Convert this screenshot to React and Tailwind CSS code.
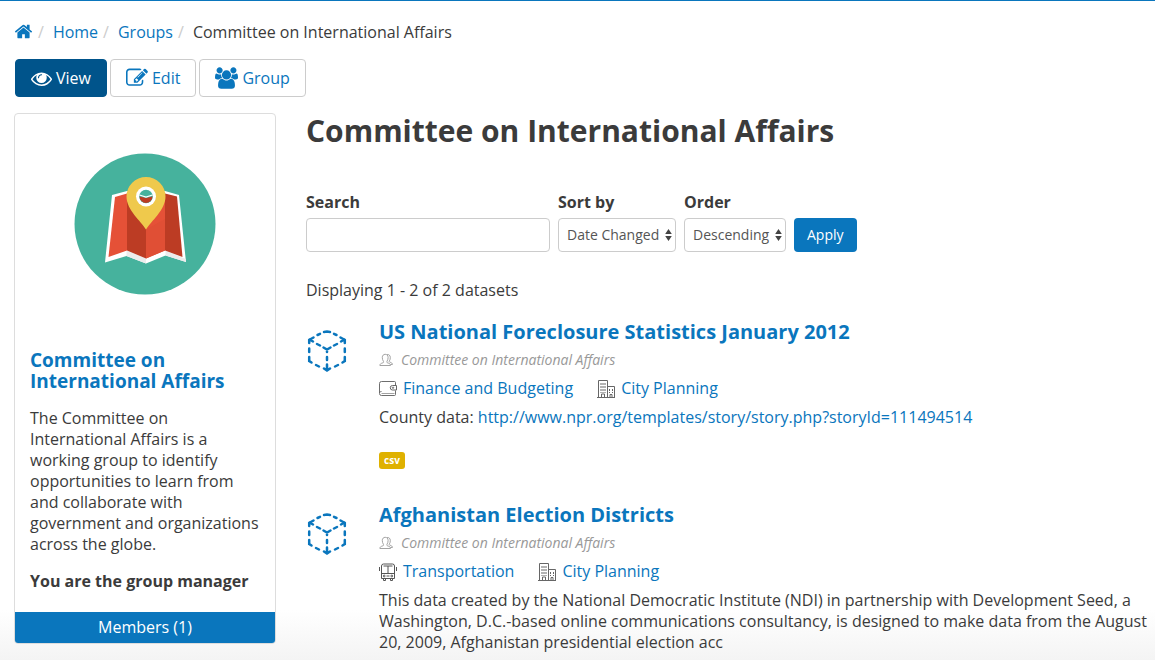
const HOME = "M1472 992v480q0 26-19 45t-45 19h-384v-384h-256v384h-384q-26 0-45-19t-19-45v-480q0-1 .5-3t.5-3l575-474 575 474q1 2 1 6zm223-69l-62 74q-8 9-21 11h-3q-13 0-21-7l-692-577-692 577q-12 8-24 7-13-2-21-11l-62-74q-8-10-7-23.5t11-21.5l719-599q32-26 76-26t76 26l244 204v-195q0-14 9-23t23-9h192q14 0 23 9t9 23v408l219 182q10 8 11 21.5t-7 23.5z";
const EYE = "M1664 960q-152-236-381-353 61 104 61 225 0 185-131.5 316.5t-316.5 131.5-316.5-131.5-131.5-316.5q0-121 61-225-229 117-381 353 133 205 333.5 326.5t434.5 121.5 434.5-121.5 333.5-326.5zm-720-384q0-20-14-34t-34-14q-125 0-214.5 89.5t-89.5 214.5q0 20 14 34t34 14 34-14 14-34q0-86 61-147t147-61q20 0 34-14t14-34zm848 384q0 34-20 69-140 230-376.5 368.5t-499.5 138.5-499.5-139-376.5-368q-20-35-20-69t20-69q140-229 376.5-368t499.5-139 499.5 139 376.5 368q20 35 20 69z";
const EDIT = "M888 1184l116-116-152-152-116 116v56h96v96h56zm440-720q-16-16-33 1l-350 350q-17 17-1 33t33-1l350-350q17-17 1-33zm80 594v190q0 119-84.5 203.5t-203.5 84.5h-832q-119 0-203.5-84.5t-84.5-203.5v-832q0-119 84.5-203.5t203.5-84.5h832q63 0 117 25 15 7 18 23 3 17-9 29l-49 49q-14 14-32 8-23-6-45-6h-832q-66 0-113 47t-47 113v832q0 66 47 113t113 47h832q66 0 113-47t47-113v-126q0-13 9-22l64-64q15-15 35-7t20 29zm-96-738l288 288-672 672h-288v-288zm444 132l-92 92-288-288 92-92q28-28 68-28t68 28l152 152q28 28 28 68t-28 68z";
const USERS = "M529 896q-162 5-265 128h-134q-82 0-138-40.5t-56-118.5q0-353 124-353 6 0 43.5 21t97.5 42.5 119 21.5q67 0 133-23-5 37-5 66 0 139 81 256zm1071 637q0 120-73 189.5t-194 69.5h-874q-121 0-194-69.5t-73-189.5q0-53 3.5-103.5t14-109 26.5-108.5 43-97.5 62-81 85.5-53.5 111.5-20q10 0 43 21.5t73 48 107 48 135 21.5 135-21.5 107-48 73-48 43-21.5q61 0 111.5 20t85.5 53.5 62 81 43 97.5 26.5 108.5 14 109 3.5 103.5zm-1024-1277q0 106-75 181t-181 75-181-75-75-181 75-181 181-75 181 75 75 181zm704 384q0 159-112.5 271.5t-271.5 112.5-271.5-112.5-112.5-271.5 112.5-271.5 271.5-112.5 271.5 112.5 112.5 271.5zm576 225q0 78-56 118.5t-138 40.5h-134q-103-123-265-128 81-117 81-256 0-29-5-66 66 23 133 23 59 0 119-21.5t97.5-42.5 43.5-21q124 0 124 353zm-128-609q0 106-75 181t-181 75-181-75-75-181 75-181 181-75 181 75 75 181z";

function Glyph({ d, viewBox = "0 0 1792 1792", className }) {
  return (
    <svg viewBox={viewBox} className={className} fill="currentColor" aria-hidden="true">
      <path d={d} />
    </svg>
  );
}

function MapLogo() {
  return (
    <svg viewBox="0 0 142 142" className="mx-auto size-[142px]" role="img" aria-label="Committee on International Affairs">
      <circle cx="71" cy="71" r="70.5" fill="#46b29d" />
      <path d="M38 42 53 38h38l14 4 7 67-20.500-6.500L72 110.500 52.500 103 31 109.500Z" fill="#fff" />
      <path d="M72 105.500v5L52.500 103v-5.500ZM91.500 97.500v5L112 109l-.3-3Z" fill="#ececec" />
      <path d="M41 44 53 40.500V97.500L34.500 104Z" fill="#e55137" />
      <path d="M53 40.500 72 46v59.500L53 97.500Z" fill="#bc3c24" />
      <path d="M72 46 91 40.500V97.500l-19 8Z" fill="#e55137" />
      <path d="M72 76.500 91 66V97.500l-19 8Z" fill="#e04f35" />
      <path d="M91 40.500 103 43.500 108.500 104 91 97.500Z" fill="#bc3c24" />
      <path d="M72 76.500C67 68 52.500 57 52.500 43.500a19.500 19.500 0 0 1 39 0C91.500 57 77 68 72 76.500Z" fill="#efc94c" />
      <circle cx="72" cy="43.500" r="10" fill="#fff" />
      <circle cx="72" cy="43.500" r="6.800" fill="#46b29d" />
      <path d="M65.500 43.500 72 45 78.500 43.500a6.500 6.500 0 0 1-13 0Z" fill="#bc3c24" />
      <path d="m65.500 42 6.500 2 6.500-2" fill="none" stroke="#fff" strokeWidth="1.200" />
    </svg>
  );
}

function Cube() {
  return (
    <svg viewBox="0 0 40 42" className="mt-[9px] h-[42px] w-10 shrink-0 text-[#0a76bd]" fill="none" stroke="currentColor" strokeWidth="2.500" strokeLinecap="round" aria-hidden="true">
      <path d="M17 2 20 1.500 23 2M10.500 5 13 3.800M29.500 5 27 3.800M2.200 13V10L6.500 7.500M37.800 13V10L33.500 7.500M2.500 9.500 6 11.500M37.500 9.500 34 11.500" />
      <path d="M10 14 13 15.500M30 14 27 15.500M16.500 17.500 20 19.500 23.500 17.500M20 19.500V22M20 27V30M20 34.500V40M17 38.500 20 40.500 23 38.500" />
      <path d="M2.200 18.500V22M37.800 18.500V22M2.200 27V31L4.500 32.500M37.800 27V31L35.500 32.500M9 35 12 36.500M31 35 28 36.500" />
    </svg>
  );
}

function PeopleIcon() {
  return (
    <svg viewBox="0 0 14 14" className="size-[14px] shrink-0" fill="none" stroke="#999" strokeWidth="0.900" strokeLinejoin="round" aria-hidden="true">
      <path d="M.9 12.500c0-1.500.8-2 3-2.700.8-.3.900-.8.500-1.500C3.700 7.200 3.300 6 3.300 4.500c0-2 1.200-3.200 2.900-3.200s2.900 1.200 2.900 3.200c0 1.500-.4 2.700-1.100 3.800-.4.700-.3 1.200.5 1.500 2.200.7 3 1.200 3 2.700Z" />
      <path d="M8 1.700c1.800-.6 3.300.7 3.300 2.800 0 1.500-.3 2.500-.9 3.400-.4.600-.2 1 .4 1.200 1.700.6 2.600 1 2.600 2.400h-1.900" />
    </svg>
  );
}

function WalletIcon() {
  return (
    <svg viewBox="0 0 18 17" className="h-[17px] w-[18px] shrink-0" fill="none" stroke="#666" strokeWidth="1" aria-hidden="true">
      <path d="M16.500 5V2.500a1 1 0 0 0-1-1h-13a2 2 0 0 0-2 2v10a2 2 0 0 0 2 2h13a1 1 0 0 0 1-1v-4M.5 13c0-.8.800-1.500 2-1.500" opacity=".95" />
      <path d="M2.500 13.500h13" opacity=".6" />
      <path d="M17.500 5.500h-4a2.200 2.200 0 0 0 0 4.500h4Z" />
      <circle cx="14" cy="7.700" r=".7" />
    </svg>
  );
}

function BusIcon() {
  return (
    <svg viewBox="0 0 18 18" className="size-[18px] shrink-0" fill="none" stroke="#555" strokeWidth="1" aria-hidden="true">
      <path d="M2.500 15.500V3a2 2 0 0 1 2-2h9a2 2 0 0 1 2 2v12.500ZM2.500 10.500h13M9 3v7.500M4.500 3h9M.5 4v4M17.500 4v4M4.500 15.500v2h2v-2M11.500 15.500v2h2v-2M7.500 13h3" />
      <circle cx="5.200" cy="13" r=".9" />
      <circle cx="12.800" cy="13" r=".9" />
    </svg>
  );
}

function CityIcon() {
  return (
    <svg viewBox="0 0 18 18" className="size-[18px] shrink-0" fill="none" stroke="#666" strokeWidth="1" aria-hidden="true">
      <path d="M1.500 17V.5h9V17M10.500 6.500h7V17M0 17.500h18M4.500 17v-3h3v3M13 17v-2.500h2V17" />
      <path d="M4 3v10M6 3v10M8 3v10M12.500 9v4M15.500 9v4" strokeDasharray="2 1" />
    </svg>
  );
}

function Tab({ active, children }) {
  return (
    <a
      href="#"
      className={
        "flex h-[38px] items-center gap-1 rounded border px-[15px] " +
        (active ? "border-[#00548b] bg-[#00548b] text-white" : "border-[#ccc] bg-white text-[#0a76bd]")
      }
    >
      {children}
    </a>
  );
}

function SelectField({ id, label, value, width }) {
  return (
    <div>
      <label htmlFor={id} className="mb-[5px] block font-bold">{label}</label>
      <div className={"relative " + width}>
        <select id={id} className="block h-[34px] w-full appearance-none rounded border border-[#ccc] bg-white pl-2 text-sm text-[#555]">
          <option>{value}</option>
        </select>
        <svg viewBox="0 0 7 12" className="pointer-events-none absolute top-[11px] right-1 h-3 w-[7px]" fill="#444" aria-hidden="true">
          <path d="M3.500 0 6.800 5H.2ZM3.500 12 .2 7h6.600Z" />
        </svg>
      </div>
    </div>
  );
}

function Dataset({ title, topics, children }) {
  return (
    <article className="flex gap-8 pl-px">
      <Cube />
      <div className="min-w-0 flex-1">
        <h2 className="text-xl leading-[22px] font-bold">
          <a href="#" className="text-[#0a76bd]">{title}</a>
        </h2>
        <div className="mt-[7px] flex items-center gap-2 text-sm leading-5 text-[#999] italic">
          <PeopleIcon />
          Committee on International Affairs
        </div>
        <ul className="mt-2 flex gap-6">
          {topics.map(([Icon, name]) => (
            <li key={name}>
              <a href="#" className="flex items-center gap-[6px] text-[#0a76bd]">
                <Icon />
                {name}
              </a>
            </li>
          ))}
        </ul>
        {children}
      </div>
    </article>
  );
}

export default function App() {
  return (
    <div className="flex min-h-screen flex-col border-t border-[#0a76bd] bg-[linear-gradient(to_top,#f4f4f4,#ffffff_50px)] pl-[14px] font-['Open_Sans',sans-serif] text-base leading-[21px] text-[#3b3b3b]">
      <nav aria-label="Breadcrumb" className="mt-[21px]">
        <ol className="flex">
          <li className="flex"><a href="#" aria-label="Front page" className="text-[#0a76bd]"><Glyph d={HOME} className="size-[19px]" /></a><span className="px-[5px] text-[#ccc]">/</span></li>
          <li className="pl-1"><a href="#" className="text-[#0a76bd]">Home</a><span className="px-[5px] text-[#ccc]">/</span></li>
          <li className="pl-1"><a href="#" className="text-[#0a76bd]">Groups</a><span className="px-[5px] text-[#ccc]">/</span></li>
          <li className="pl-1">Committee on International Affairs</li>
        </ol>
      </nav>
      <div className="mt-4 flex gap-[3px] pl-px">
        <Tab active><Glyph d={EYE} className="size-[21px]" />View</Tab>
        <Tab><Glyph d={EDIT} className="size-[22px]" />Edit</Tab>
        <Tab><Glyph d={USERS} viewBox="-64 0 1920 1792" className="h-[22px] w-[23px]" />Group</Tab>
      </div>
      <div className="mt-4 flex gap-[30px]">
        <aside className="w-[262px] shrink-0">
          <div className="overflow-hidden rounded border border-[#ddd] bg-white">
            <div className="px-[15px] pt-[39px] pb-5">
              <MapLogo />
              <h2 className="mt-[55px] text-[19px] leading-[21px] font-bold text-[#0a76bd]">Committee on International Affairs</h2>
              <p className="mt-4">
                The Committee on International Affairs is a working group to identify opportunities to learn from and collaborate with government and organizations across the globe.
              </p>
              <p className="mt-4 font-bold">You are the group manager</p>
            </div>
            <a href="#" className="block bg-[#0a76bd] py-[5px] text-center text-white">Members (1)</a>
          </div>
        </aside>
        <main className="min-w-0 flex-1">
          <h1 className="text-3xl leading-9 font-bold">Committee on International Affairs</h1>
          <form className="mt-[43px] flex items-end gap-2" onSubmit={(e) => e.preventDefault()}>
            <div>
              <label htmlFor="search" className="mb-[5px] block font-bold">Search</label>
              <input id="search" type="text" className="block h-[34px] w-[244px] rounded border border-[#ccc] bg-white px-3" />
            </div>
            <SelectField id="sort" label="Sort by" value="Date Changed" width="w-[118px]" />
            <SelectField id="order" label="Order" value="Descending" width="w-[102px]" />
            <button type="submit" className="h-[34px] rounded bg-[#0a76bd] px-[13px] text-sm text-white">Apply</button>
          </form>
          <p className="mt-7">Displaying 1 - 2 of 2 datasets</p>
          <div className="mt-5 flex flex-col gap-[35px]">
            <Dataset title="US National Foreclosure Statistics January 2012" topics={[[WalletIcon, "Finance and Budgeting"], [CityIcon, "City Planning"]]}>
              <p className="mt-2">
                County data: <a href="#" className="text-[#0a76bd]">http://www.npr.org/templates/story/story.php?storyId=111494514</a>
              </p>
              <a href="#" className="mt-6 block w-[26px] rounded-[3px] bg-[#dfb100] text-center text-[10px] leading-[17px] font-bold text-white">csv</a>
            </Dataset>
            <Dataset title="Afghanistan Election Districts" topics={[[BusIcon, "Transportation"], [CityIcon, "City Planning"]]}>
              <p className="mt-2">
                This data created by the National Democratic Institute (NDI) in partnership with Development Seed, a Washington, D.C.-based online communications consultancy, is designed to make data from the August 20, 2009, Afghanistan presidential election acc
              </p>
            </Dataset>
          </div>
        </main>
      </div>
    </div>
  );
}
